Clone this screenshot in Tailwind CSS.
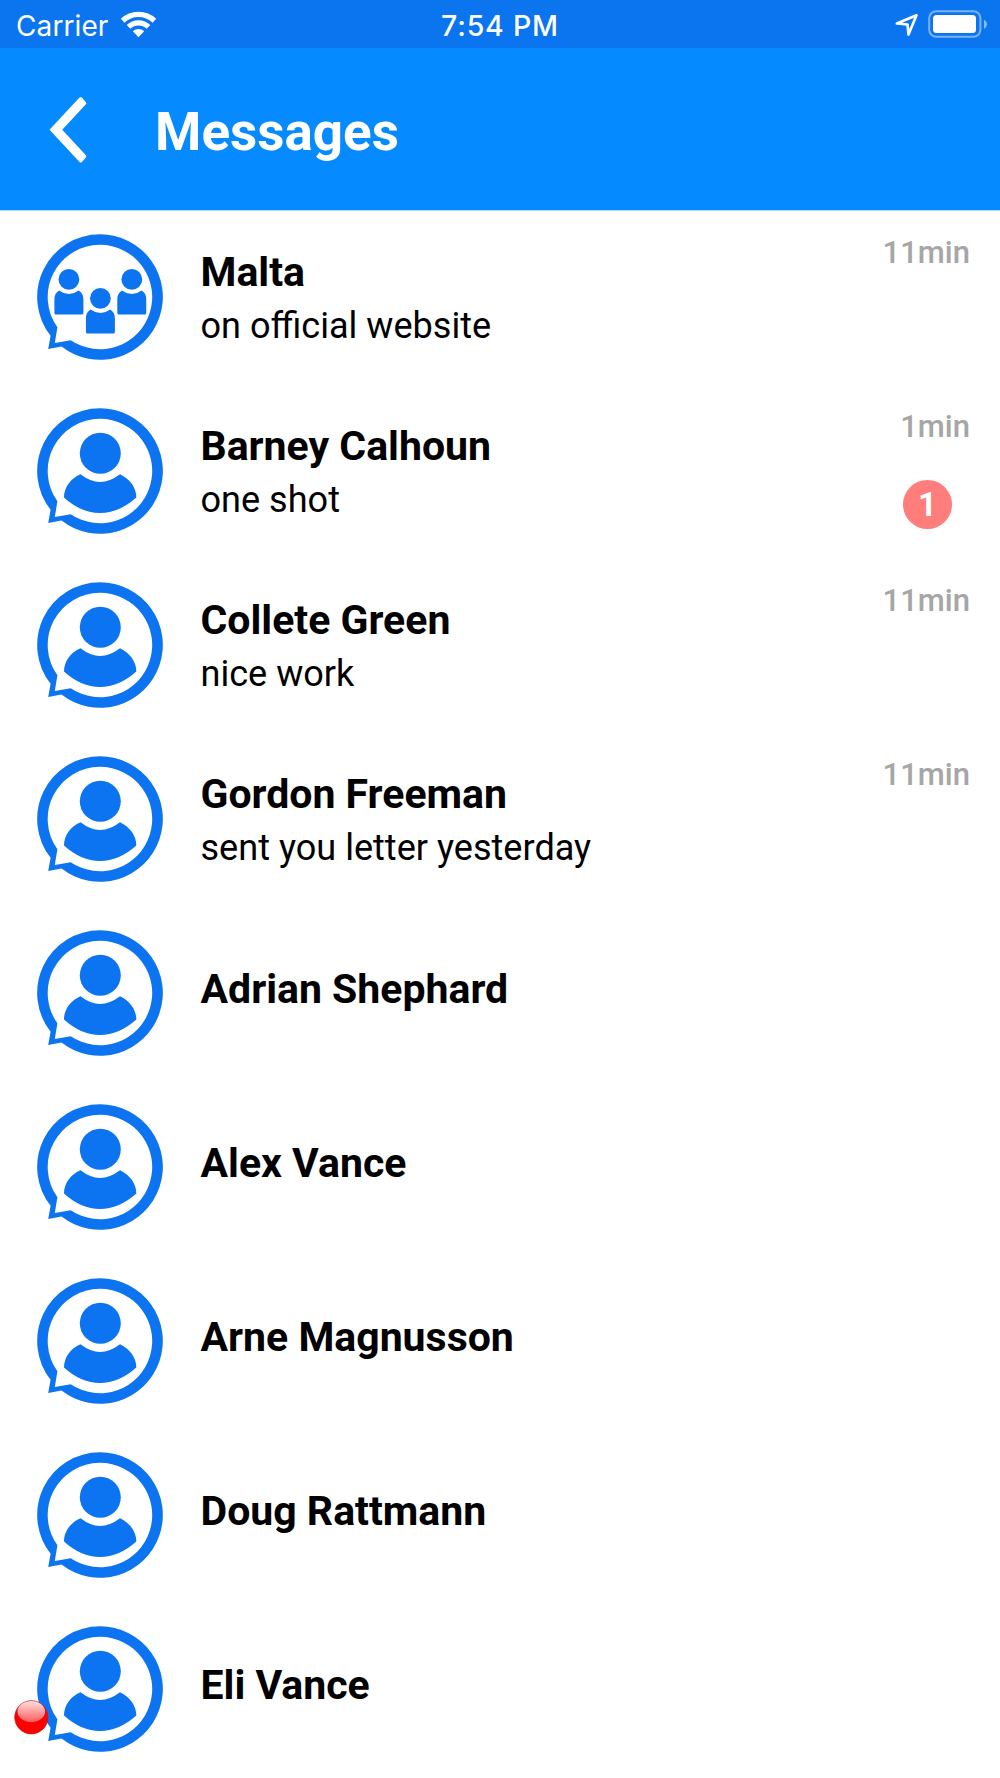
<!DOCTYPE html>
<html lang="en">
<head>
<meta charset="utf-8">
<title>Messages</title>
<script src="https://cdn.jsdelivr.net/npm/@tailwindcss/browser@4"></script>
</head>
<body class="relative h-[1778px] w-[1000px] overflow-hidden bg-white font-['Roboto',sans-serif] text-black">
<svg class="hidden">
  <symbol id="bubble" viewBox="0 0 126 126">
    <path fill="#0c74f0" fill-rule="evenodd" d="M63 .2A62.8 62.8 0 1 1 24.500 112.600L11.200 115 13.600 101.800A62.800 62.800 0 0 1 63 .2ZM63 10.800A52.200 52.200 0 0 0 20.400 93.300L17.800 109 33.700 106.200A52.200 52.200 0 1 0 63 10.800Z"/>
  </symbol>
  <symbol id="person" viewBox="0 0 126 126">
    <use href="#bubble"/>
    <g fill="#0c74f0"><circle cx="63.300" cy="45.300" r="20.500"/>
    <path d="M43.500 66.300Q63 81.500 83 66.300C93 71 99.500 80 99.300 89.500Q82 105 63 105T27 89.500C27 79.500 33.500 70.500 43.500 66.300Z"/></g>
  </symbol>
  <symbol id="member" viewBox="0 0 30 46">
    <circle cx="15" cy="10.500" r="10.400"/>
    <path d="M5.300 21.500Q15 28.800 24.700 21.500C28.300 23.500 29.500 26.500 29.500 30.500V44Q29.500 45.700 28 45.700H2Q.5 45.700 .5 44V30.500C.5 26.500 1.700 23.500 5.300 21.500Z"/>
  </symbol>
  <symbol id="group" viewBox="0 0 126 126">
    <use href="#bubble"/>
    <g fill="#0c74f0">
      <use href="#member" x="16.900" y="34.900" width="30" height="46"/>
      <use href="#member" x="79.800" y="34.900" width="30" height="46"/>
      <use href="#member" x="48.400" y="53.900" width="30" height="46"/>
    </g>
  </symbol>
</svg>

<div class="grid h-12 grid-cols-3 items-center bg-[#0b74ef] font-['Inter',sans-serif] text-[28px] text-white">
  <div class="flex items-center pl-4">
    <span class="w-[104px] whitespace-nowrap pt-1 leading-[44px] tracking-[0.1px]">Carrier</span>
    <svg class="-mt-px h-7 w-[37px]" viewBox="0 0 37 28" fill="#fff">
      <path d="M.8 8.800A25.500 25.500 0 0 1 36.200 8.800L32.600 12.700A20.500 20.500 0 0 0 4.400 12.700Z"/>
      <path d="M6.700 15A17 17 0 0 1 30.300 15L26.600 18.700A12 12 0 0 0 10.400 18.700Z"/>
      <path d="M12.800 21.200A8.500 8.500 0 0 1 24.200 21.200L18.500 27.200Z"/>
    </svg>
  </div>
  <span class="pt-1 text-center text-[28.500px] font-medium leading-[44px] tracking-[0.8px]">7:54 PM</span>
  <div class="flex items-center justify-end pr-3">
    <svg class="h-12 w-[94px]" viewBox="894 0 94 48">
      <path d="M896.800 23.500 916.500 15.300 908.500 34.500 907.500 24.500Z" fill="none" stroke="#fff" stroke-width="2.600" stroke-linejoin="round"/>
      <rect x="929.200" y="11.200" width="51.200" height="25.600" rx="7" fill="none" stroke="#fff" stroke-opacity=".45" stroke-width="2"/>
      <rect x="933" y="15" width="43" height="18" rx="3.500" fill="#fff"/>
      <path d="M984 19.500Q987 21.500 987 24.200T984 29Z" fill="#fff" fill-opacity=".5"/>
    </svg>
  </div>
</div>

<header class="flex h-[163px] items-center border-b border-[#a8dcf4] bg-[#058aff] pl-12 text-white">
  <svg class="mt-0.5 h-[68px] w-10" viewBox="48 96 40 68"><path d="M49.500 129.800 79.500 97.500Q80.700 96.400 81.900 97.500L85.900 102.300Q86.800 103.200 85.900 104.300L62.200 129.800 85.900 155.300Q86.800 156.400 85.900 157.500L81.900 162Q80.700 163.200 79.500 162Z" fill="#fff"/></svg>
  <h1 class="ml-[67px] pt-[5px] text-[53px] font-bold leading-[62px]">Messages</h1>
</header>

<main id="list" class="-mt-px"></main>
<svg class="absolute left-[14px] top-[1700px] h-9 w-9" viewBox="0 0 36 36">
  <defs><linearGradient id="shine" x1="0" y1="0" x2="0" y2="1"><stop offset="0" stop-color="#ffe0e0"/><stop offset="1" stop-color="#ff5c5c"/></linearGradient></defs>
  <circle cx="17.300" cy="17.300" r="16.600" fill="#f00" stroke="#c81414" stroke-width=".7"/>
  <ellipse cx="17.300" cy="11.600" rx="13.800" ry="10.600" fill="url(#shine)"/>
</svg>

<script>
const chats = [
  ["Malta", "on official website", "11min"],
  ["Barney Calhoun", "one shot", "1min", 1],
  ["Collete Green", "nice work", "11min"],
  ["Gordon Freeman", "sent you letter yesterday", "11min"],
  ["Adrian Shephard"], ["Alex Vance"], ["Arne Magnusson"], ["Doug Rattmann"], ["Eli Vance"],
];
document.getElementById("list").innerHTML = chats.map(([name, text, time, unread], i) => `
  <article class="flex h-[174px] pl-[37px] pr-[30px]">
    <svg class="mt-6 h-[126px] w-[126px] shrink-0"><use href="#${i ? "person" : "group"}"/></svg>
    <div class="ml-[37.500px] flex-1 ${text ? "pt-[35px]" : "pt-[56px]"}">
      <h2 class="text-[41px] font-bold leading-[54px]">${name}</h2>
      ${text ? `<p class="text-[36.100px] leading-[54px]">${text}</p>` : ""}
    </div>
    <div class="flex flex-col items-end pt-[25px]">
      ${time ? `<time class="text-[31px] font-medium leading-9 text-[#a6a6a6]">${time}</time>` : ""}
      ${unread ? `<span class="mr-[18px] mt-[35px] flex h-[49px] w-[49px] items-center justify-center rounded-full bg-[#ff7d7b] text-[33px] font-bold leading-none text-white">${unread}</span>` : ""}
    </div>
  </article>`).join("");
</script>
</body>
</html>
